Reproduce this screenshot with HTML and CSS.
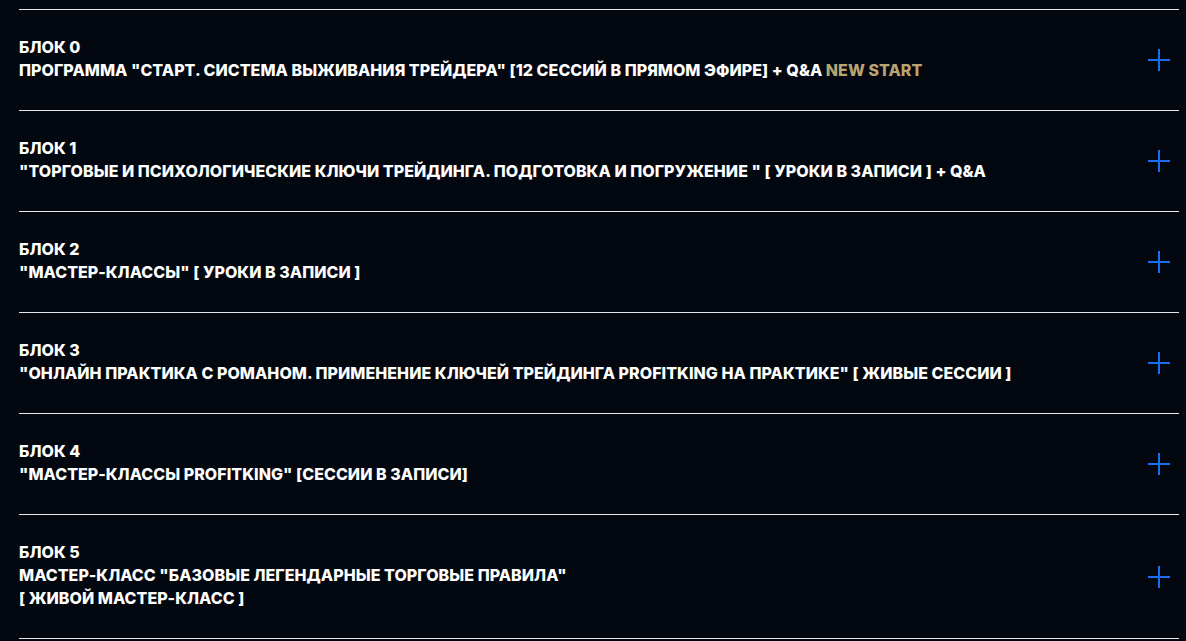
FILE: index.html
```html
<!DOCTYPE html>
<html lang="ru">
<head>
<meta charset="utf-8">
<link rel="stylesheet" href="styles.css">
</head>
<body>
<div class="list">
  <div class="item">
    <div class="text"><div>БЛОК 0</div><div>ПРОГРАММА "СТАРТ. СИСТЕМА ВЫЖИВАНИЯ ТРЕЙДЕРА" [12 СЕССИЙ В ПРЯМОМ ЭФИРЕ] + Q&amp;A <span class="gold">NEW START</span></div></div>
    <span class="plus"></span>
  </div>
  <div class="item">
    <div class="text"><div>БЛОК 1</div><div>"ТОРГОВЫЕ И ПСИХОЛОГИЧЕСКИЕ КЛЮЧИ ТРЕЙДИНГА. ПОДГОТОВКА И ПОГРУЖЕНИЕ " [ УРОКИ В ЗАПИСИ ] + Q&amp;A</div></div>
    <span class="plus"></span>
  </div>
  <div class="item">
    <div class="text"><div>БЛОК 2</div><div>"МАСТЕР-КЛАССЫ" [ УРОКИ В ЗАПИСИ ]</div></div>
    <span class="plus"></span>
  </div>
  <div class="item">
    <div class="text"><div>БЛОК 3</div><div>"ОНЛАЙН ПРАКТИКА С РОМАНОМ. ПРИМЕНЕНИЕ КЛЮЧЕЙ ТРЕЙДИНГА PROFITKING НА ПРАКТИКЕ" [ ЖИВЫЕ СЕССИИ ]</div></div>
    <span class="plus"></span>
  </div>
  <div class="item">
    <div class="text"><div>БЛОК 4</div><div>"МАСТЕР-КЛАССЫ PROFITKING" [СЕССИИ В ЗАПИСИ]</div></div>
    <span class="plus"></span>
  </div>
  <div class="item">
    <div class="text"><div>БЛОК 5</div><div>МАСТЕР-КЛАСС "БАЗОВЫЕ ЛЕГЕНДАРНЫЕ ТОРГОВЫЕ ПРАВИЛА"</div><div>[ ЖИВОЙ МАСТЕР-КЛАСС ]</div></div>
    <span class="plus"></span>
  </div>
</div>
</body>
</html>
```
FILE: styles.css
```css
html, body {
  margin: 0;
  background: #03070f;
}
body {
  font-family: Inter, "Liberation Sans", sans-serif;
  color: #ffffff;
}
.list {
  padding: 9px 7px 0 19px;
}
.item {
  display: flex;
  align-items: center;
  justify-content: space-between;
  border-top: 1px solid #e8e8e8;
  padding: 26px 0 28px;
}
.item:last-child {
  border-bottom: 1px solid #e8e8e8;
}
.text {
  font-size: 16px;
  font-weight: 800;
  line-height: 23px;
  letter-spacing: 0.05px;
  text-transform: uppercase;
}
.gold {
  color: #b8a470;
}
.plus {
  position: relative;
  width: 22px;
  height: 22px;
  margin: 2px 9px 0 0;
  flex: none;
}
.plus::before, .plus::after {
  content: "";
  position: absolute;
  background: #1a6ef5;
}
.plus::before {
  left: 0; right: 0; top: 10px; height: 2px;
}
.plus::after {
  top: 0; bottom: 0; left: 10px; width: 2px;
}
```
